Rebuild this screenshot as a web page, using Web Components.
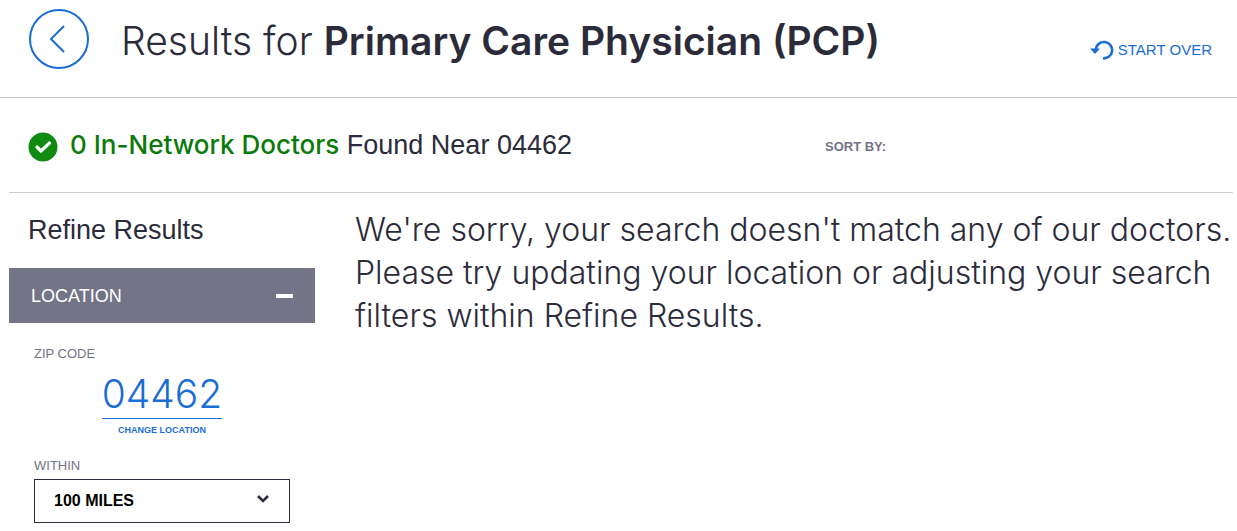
<!DOCTYPE html>
<html lang="en">
<head>
<meta charset="utf-8">
<meta name="viewport" content="width=device-width, initial-scale=1">
<title>Doctor search results</title>
<style>
  body {
    --ink: #2b2b3a;
    --blue: #1a6dd4;
    --muted: #737386;
    --rule: #c9c9c9;
    --text: "Liberation Sans", Arial, sans-serif;
    --display: Inter, "Liberation Sans", sans-serif;
    margin: 0;
    background: #fff;
    color: var(--ink);
    font-family: var(--text);
  }
</style>
</head>
<body>
<results-page></results-page>

<template id="results-page">
  <style>
    :host { display: block; }
    .body {
      display: grid;
      grid-template-columns: 306px 1fr;
      column-gap: 40px;
      margin: 0 4px 0 9px;
    }
    .message {
      margin: 15px 0 0;
      font: 300 32px/43px var(--display);
    }
  </style>
  <results-header>Results for <b slot="term">Primary Care Physician (PCP)</b></results-header>
  <results-summary zip="04462" count="0"></results-summary>
  <div class="body">
    <refine-panel></refine-panel>
    <main><p class="message">We're sorry, your search doesn't match any of our doctors. Please try updating your location or adjusting your search filters within Refine Results.</p></main>
  </div>
</template>

<template id="results-header">
  <style>
    :host { display: block; border-bottom: 1px solid var(--rule); }
    header { display: flex; align-items: flex-start; padding: 9px 25px 28px 29px; }
    .back {
      box-sizing: border-box; width: 60px; height: 60px; padding: 0;
      border: 2px solid var(--blue); border-radius: 50%;
      background: none; color: inherit; cursor: pointer;
    }
    .back svg { display: block; }
    h1 { flex: 1; margin: 8px 0 0 32px; font: 300 39px/48px var(--display); }
    ::slotted(b) { font: 600 39px/48px var(--display); }
    a {
      display: flex; align-items: center; gap: 4px; margin-top: 30px;
      color: var(--blue); font-size: 15px; line-height: 22px; text-decoration: none;
    }
  </style>
  <header>
    <button class="back" type="button" aria-label="Back">
      <svg width="56" height="56" viewBox="0 0 56 56" fill="none" stroke="#1a6dd4" stroke-width="2"><path d="M33 15 20 28 33 41"/></svg>
    </button>
    <h1><slot></slot><slot name="term"></slot></h1>
    <a href="#">
      <svg width="24" height="20" viewBox="0 0 24 20"><path d="M5.800 9A8.200 8.200 0 1 1 13 18.300" fill="none" stroke="#1a6dd4" stroke-width="2.600"/><path d="M0 8.500h10L5 14z" fill="#1a6dd4"/></svg>
      <span>START OVER</span>
    </a>
  </header>
</template>

<template id="results-summary">
  <style>
    :host { display: block; margin: 0 4px 0 9px; border-bottom: 1px solid var(--rule); }
    .row { display: grid; grid-template-columns: 2fr 1fr; padding: 32px 0; align-items: center; }
    .found { display: flex; align-items: flex-end; gap: 12px; height: 30px; padding-left: 19px; }
    .found svg { margin-bottom: -2px; }
    h2 { margin: 0; font-size: 27px; line-height: 30px; font-weight: 400; }
    strong { color: #0a7a0a; font: 500 26px/30px var(--display); }
    .sort { padding-top: 4px; color: var(--muted); font-size: 13px; line-height: 16px; font-weight: 700; }
  </style>
  <div class="row">
    <div class="found">
      <svg width="30" height="30" viewBox="0 0 30 30"><circle cx="15" cy="15" r="14.500" fill="#118a11"/><path d="m9 15 4 4 8.500-8" fill="none" stroke="#fff" stroke-width="3.200" stroke-linecap="round" stroke-linejoin="round"/></svg>
      <h2><strong></strong> <span></span></h2>
    </div>
    <div class="sort">SORT BY:</div>
  </div>
</template>

<template id="refine-panel">
  <style>
    :host { display: block; }
    h2 { margin: 0; padding: 22px 19px 23px; font-size: 27px; line-height: 30px; font-weight: 400; }
    .toggle {
      box-sizing: border-box; display: flex; align-items: center; justify-content: space-between;
      width: 100%; height: 55px; padding: 0 22px; border: 0;
      background: #747487; color: #fff; font: 400 18px/22px var(--text); cursor: pointer;
    }
    .fields { display: flex; flex-direction: column; padding: 23px 25px 8px; }
    .label { color: var(--muted); font-size: 13px; line-height: 16px; }
    .zip { align-self: center; display: flex; flex-direction: column; align-items: center; margin: 8px 0 17px; color: var(--blue); text-decoration: none; }
    .code { border-bottom: 1px solid var(--blue); font: 300 39px/48px var(--display); }
    .change { font-size: 9px; line-height: 22px; font-weight: 700; }
    .box { display: grid; align-items: center; margin-top: 5px; }
    .box > * { grid-area: 1 / 1; }
    select {
      appearance: none; width: 100%; height: 44px; padding: 0 19px;
      border: 1px solid var(--ink); border-radius: 0; background: #fff;
      color: #000; font: 700 16px/20px var(--text);
    }
    .box svg { justify-self: end; margin-right: 20px; pointer-events: none; }
  </style>
  <h2>Refine Results</h2>
  <button class="toggle" type="button" aria-expanded="true">
    <span>LOCATION</span>
    <svg width="17" height="4" viewBox="0 0 17 4"><path d="M0 0h17v4H0z" fill="#fff"/></svg>
  </button>
  <div class="fields">
    <span class="label">ZIP CODE</span>
    <a class="zip" href="#"><span class="code">04462</span><span class="change">CHANGE LOCATION</span></a>
    <label class="label" for="within">WITHIN</label>
    <div class="box">
      <select id="within"><option>100 MILES</option></select>
      <svg width="14" height="14" viewBox="0 0 14 14"><path d="m2 2 5 5 5-5" fill="none" stroke="#2b2b3a" stroke-width="2.600"/></svg>
    </div>
  </div>
</template>

<script>
  class TemplateElement extends HTMLElement {
    constructor() {
      super();
      const template = document.getElementById(this.localName);
      this.attachShadow({ mode: "open" }).append(template.content.cloneNode(true));
    }
  }
  class ResultsHeader extends TemplateElement {}
  class RefinePanel extends TemplateElement {}
  class ResultsPage extends TemplateElement {}
  class ResultsSummary extends TemplateElement {
    connectedCallback() {
      this.shadowRoot.querySelector("strong").textContent = `${this.getAttribute("count")} In-Network Doctors`;
      this.shadowRoot.querySelector("h2 span").textContent = `Found Near ${this.getAttribute("zip")}`;
    }
  }
  customElements.define("results-header", ResultsHeader);
  customElements.define("results-summary", ResultsSummary);
  customElements.define("refine-panel", RefinePanel);
  customElements.define("results-page", ResultsPage);
</script>
</body>
</html>
